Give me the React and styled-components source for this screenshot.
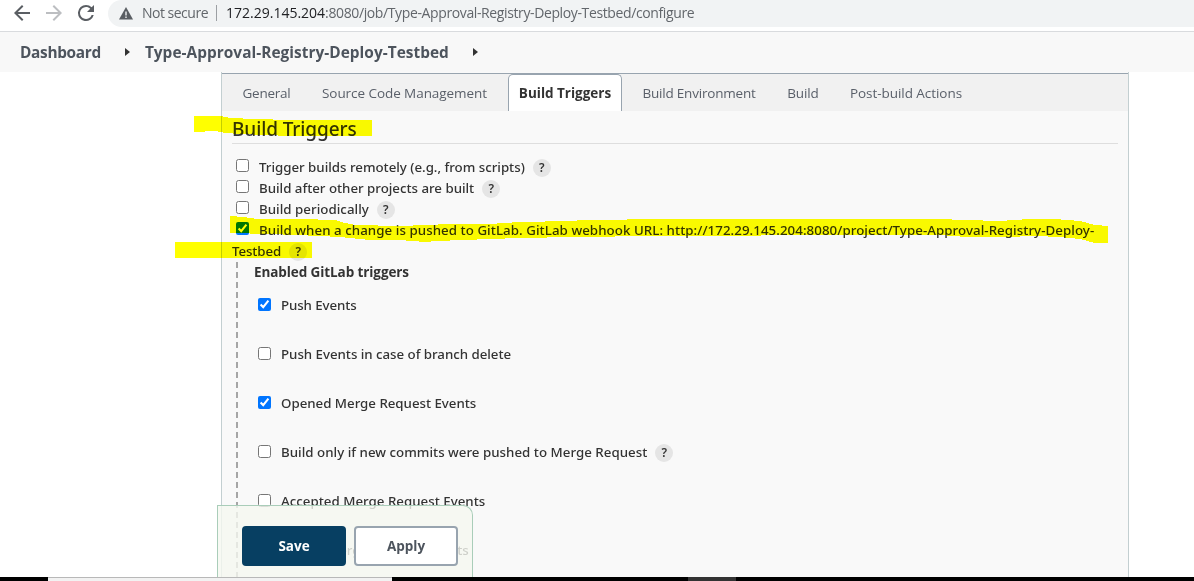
import React from 'react';
import styled, { createGlobalStyle } from 'styled-components';

const Global = createGlobalStyle`
  * { box-sizing: border-box; }
  body { margin: 0; background: #fff; overflow: hidden; }
`;

const Page = styled.div`
  position: relative;
  display: flex;
  flex-direction: column;
  width: 1194px;
  height: 581px;
  overflow: hidden;
  background: #fff;
  color: #333;
  font: 400 13.5px "Open Sans", "Noto Sans", sans-serif;
`;

const BrowserBar = styled.header`
  display: flex;
  flex: none;
  height: 32px;
  padding-left: 13px;
  border-bottom: 1px solid #d9dbde;
`;

const NavIcon = styled.svg`
  width: 18px;
  height: 18px;
  margin: 4px 14px 0 0;
  flex: none;
  fill: ${(p) => p.$color || '#5a5e63'};
`;

const AddressBar = styled.div`
  display: flex;
  align-items: center;
  flex: 1;
  height: 27px;
  margin-left: -1px;
  padding: 0 0 1px 11px;
  background: #f1f3f4;
  border-radius: 14px 0 0 14px;
  color: #62666b;
  font-size: 14px;
  line-height: 20px;
`;

const Warning = styled.svg`
  width: 14px;
  height: 13px;
  margin-right: 9px;
`;

const Divider = styled.span`
  width: 1px;
  height: 16px;
  margin: 0 9px 0 8px;
  background: #9c9fa3;
`;

const Track = styled.span`
  white-space: ${(p) => (p.$wrap ? 'normal' : 'nowrap')};
  letter-spacing: ${(p) => p.$ls || 0}px;
`;

const Host = styled(Track)`
  color: #202124;
`;

const Breadcrumbs = styled.nav`
  display: flex;
  align-items: center;
  flex: none;
  height: 40px;
  padding-left: 20px;
  background: #f8f8f8;
  color: #4d545d;
  font-size: 15.4px;
  font-weight: 700;
`;

const Caret = styled.span`
  width: 0;
  height: 0;
  margin: 0 15px 0 24px;
  border: 4px solid transparent;
  border-width: 4px 0 4px 5px;
  border-left-color: #333;
`;

const Main = styled.main`
  display: flex;
  flex-direction: column;
  flex: 1;
  width: 908px;
  margin-left: 221px;
  min-height: 0;
  overflow: hidden;
  border: solid #c3cfd1;
  border-width: 0 1px;
  background: #f9f9f9;
`;

const Tabs = styled.div`
  display: flex;
  flex: none;
  height: 38px;
  margin-top: 1px;
  padding-left: 10px;
  border-top: 1px solid #98a4af;
  background: #f1f1f1;
`;

const Tab = styled.div`
  display: flex;
  align-items: center;
  justify-content: center;
  flex: none;
  width: ${(p) => p.$w}px;
  border: solid ${(p) => (p.$active ? '#98a4af' : 'transparent')};
  border-width: 1px 1px 0;
  border-radius: 5px 5px 0 0;
  background: ${(p) => (p.$active ? '#fff' : 'transparent')};
  color: ${(p) => (p.$active ? '#333' : '#595f69')};
  font-weight: ${(p) => (p.$active ? 700 : 400)};
`;

const Section = styled.section`
  padding: 0 10px;
  font: 500 13.3px "Noto Sans", sans-serif;
`;

const Heading = styled.h2`
  height: 33px;
  margin: 0 0 13px;
  padding-top: 4px;
  border-bottom: 1px solid #dedede;
  font-size: 19px;
  font-weight: 500;
  letter-spacing: -0.1px;
  line-height: 28px;
`;

const Option = styled.label`
  display: block;
  height: ${(p) => (p.$lines || 1) * 21}px;
  line-height: 21px;
`;

const Check = styled.input`
  width: 13px;
  height: 13px;
  margin: 0 10px 0 4px;
  vertical-align: 0;
`;

const HelpBadge = styled.span`
  display: inline-block;
  width: 18px;
  height: 18px;
  margin: -4px 0 -4px 8px;
  border-radius: 50%;
  background: #e5e5e5;
  color: #333;
  font-size: 12px;
  font-weight: 600;
  line-height: 18px;
  text-align: center;
`;

const Nested = styled.div`
  margin-left: 4px;
  padding: 0 0 28px 18px;
  background: repeating-linear-gradient(#a6a6a6 0 6px, transparent 6px 10px) left top / 2px 100% no-repeat;
`;

const NestedTitle = styled.div`
  padding-bottom: 12px;
  font: 700 13.5px/21px "Open Sans", sans-serif;
`;

const NestedOption = styled(Option)`
  margin-bottom: 28px;

  ${Check} {
    vertical-align: -1px;
  }
`;

const SaveBar = styled.div`
  position: absolute;
  left: 217px;
  bottom: 4px;
  display: flex;
  gap: 8px;
  width: 256px;
  height: 72px;
  padding: 20px 0 0 24px;
  border: 1px solid #a9cdb9;
  border-bottom: 0;
  border-radius: 0 10px 0 0;
  background: rgba(245, 248, 240, 0.8);
`;

const Button = styled.button`
  width: 104px;
  height: 40px;
  padding: 0;
  border: 2px solid ${(p) => (p.$primary ? '#073f62' : '#98a4af')};
  border-radius: 4px;
  background: ${(p) => (p.$primary ? '#073f62' : '#fff')};
  color: ${(p) => (p.$primary ? '#fff' : '#4d545d')};
  font: 700 13.5px "Open Sans", sans-serif;
`;

const Taskbar = styled.footer`
  display: flex;
  flex: none;
  height: 4px;
  padding-left: 48px;
  background: #000;
`;

const SearchBox = styled.div`
  width: 344px;
  margin-right: 296px;
  border-top: 1px solid #b8b8b8;
  background: #f2f2f2;
`;

const TaskItem = styled.div`
  width: 48px;
  background: #333;
`;

const Marker = styled.svg`
  position: absolute;
  left: 0;
  top: 0;
  width: 1194px;
  height: 581px;
  fill: #ff0;
  mix-blend-mode: multiply;
  pointer-events: none;
`;

const tabs = [
  ['General', 69, -0.24],
  ['Source Code Management', 207, -0.06],
  ['Build Triggers', 114, 0],
  ['Build Environment', 154, -0.2],
  ['Build', 54, -0.1],
  ['Post-build Actions', 152, -0.05],
];

const triggers = [
  ['Trigger builds remotely (e.g., from scripts)', -0.015],
  ['Build after other projects are built', -0.015],
  ['Build periodically', 0.03],
];

const events = [
  ['Push Events', -0.1, true],
  ['Push Events in case of branch delete', -0.03],
  ['Opened Merge Request Events', -0.02, true],
  ['Build only if new commits were pushed to Merge Request', 0.02, false, true],
  ['Accepted Merge Request Events', 0.01],
  ['Closed Merge Request Events', 0],
];

const Help = () => <HelpBadge>?</HelpBadge>;

export default function App() {
  return (
    <Page>
      <Global />
      <BrowserBar>
        <NavIcon viewBox="3 3 18 18"><path d="M20 11H7.83l5.59-5.59L12 4l-8 8 8 8 1.41-1.41L7.83 13H20z" /></NavIcon>
        <NavIcon viewBox="3 3 18 18" $color="#bcbec1"><path d="M4 11h12.17l-5.59-5.59L12 4l8 8-8 8-1.41-1.41L16.17 13H4z" /></NavIcon>
        <NavIcon viewBox="3 3 18 18"><path d="M17.65 6.35A7.96 7.96 0 0 0 12 4a8 8 0 1 0 7.73 10h-2.08A6 6 0 1 1 12 6c1.66 0 3.14.69 4.22 1.78L13 11h7V4z" /></NavIcon>
        <AddressBar>
          <Warning viewBox="0 0 14 13">
            <path d="M7 0 14 12.5H0Z" fill="#5a5e63" />
            <path d="M6.3 4.5h1.4v4H6.3zM6.3 9.5h1.4v1.4H6.3z" fill="#f1f3f4" />
          </Warning>
          <Track $ls={-0.5}>Not secure</Track>
          <Divider />
          <Host>172.29.145.204</Host>
          <Track $ls={-0.38}>:8080/job/Type-Approval-Registry-Deploy-Testbed/configure</Track>
        </AddressBar>
      </BrowserBar>
      <Breadcrumbs>
        <Track $ls={-0.32}>Dashboard</Track>
        <Caret />
        <Track $ls={0.04}>Type-Approval-Registry-Deploy-Testbed</Track>
        <Caret />
      </Breadcrumbs>
      <Main>
        <Tabs>
          {tabs.map(([name, w, ls]) => (
            <Tab key={name} $w={w} $active={name === 'Build Triggers'}>
              <Track $ls={ls}>{name}</Track>
            </Tab>
          ))}
        </Tabs>
        <Section>
          <Heading>Build Triggers</Heading>
          {triggers.map(([name, ls]) => (
            <Option key={name}>
              <Check type="checkbox" />
              <Track $ls={ls}>{name}</Track>
              <Help />
            </Option>
          ))}
          <Option $lines={2}>
            <Check type="checkbox" defaultChecked />
            <Track $wrap $ls={0.057}>
              Build when a change is pushed to GitLab. GitLab webhook URL: http://172.29.145.204:8080/project/Type-Approval-Registry-Deploy-
            </Track>
            <wbr />
            <Track $ls={-0.1}>Testbed</Track>
            <Help />
          </Option>
          <Nested>
            <NestedTitle><Track $ls={-0.09}>Enabled GitLab triggers</Track></NestedTitle>
            {events.map(([name, ls, on, help]) => (
              <NestedOption key={name}>
                <Check type="checkbox" defaultChecked={on} />
                <Track $ls={ls}>{name}</Track>
                {help && <Help />}
              </NestedOption>
            ))}
          </Nested>
        </Section>
      </Main>
      <Taskbar>
        <SearchBox />
        <TaskItem />
      </Taskbar>
      <SaveBar>
        <Button $primary>Save</Button>
        <Button>Apply</Button>
      </SaveBar>
      <Marker viewBox="0 0 1194 581" shapeRendering="crispEdges">
        <path d="M194 116H221L230 118 255 119 290 120H372V136H290L240 134 225 133 215 131 194 132Z" />
        <path d="M230 216 243 217 258 219H300L335 220 345 223 355 225 400 226 450 224 490 224 520 222 570 221 584 220 669 219H937L966 220 1000 221 1030 219H1055L1080 221 1095 225 1108 226V243H1095L1080 239 1060 237 1035 236 1005 237 966 237 940 235H870L656 236 574 237 520 238 490 239 437 241 425 242 400 240H370L340 237 320 236 270 234 230 233Z" />
        <path d="M175 242H312V258H175Z" />
      </Marker>
    </Page>
  );
}
